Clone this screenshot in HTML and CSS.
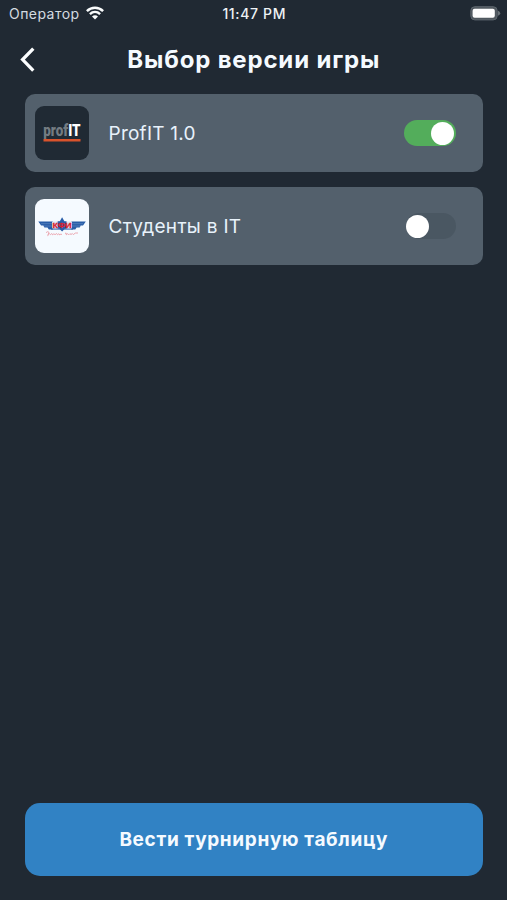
FILE: index.html
```html
<!DOCTYPE html>
<html lang="ru">
<head>
<meta charset="utf-8">
<meta name="viewport" content="width=device-width">
<title>Выбор версии игры</title>
<link rel="stylesheet" href="styles.css">
</head>
<body>
<div class="screen">
  <div class="status">
    <div class="carrier"><span class="carrier-name">Оператор</span>
      <svg class="wifi" viewBox="0 0 18 14" width="18" height="14"><g fill="none" stroke="#fafcfd" stroke-width="2.5"><path d="M.9 5.1C5.5.7 12.5.7 17.1 5.1"/><path d="M3.9 8.1C6.9 5.4 11.1 5.4 14.1 8.1"/></g><path d="M6 10.4C7.8 9 10.2 9 12 10.4L9 13.5Z" fill="#fafcfd"/></svg>
    </div>
    <span class="time">11:47 PM</span>
    <svg class="battery" viewBox="0 0 31 15" width="31" height="15"><rect x=".8" y=".7" width="26.4" height="13.2" rx="4" fill="#50585f" stroke="#5d666d"/><rect x="2.6" y="2.8" width="22.2" height="9" rx="2" fill="#fff"/><path d="M28 4.8Q30.2 5.5 30.2 7.3T28 9.8Z" fill="#6b7379"/></svg>
  </div>
  <header class="header">
    <svg class="back" viewBox="0 0 16 26" width="16" height="26"><path d="M13.3 1.6 2.6 12.6 13.3 23.6" fill="none" stroke="#fcfeff" stroke-width="3.3"/></svg>
    <h1 class="title">Выбор версии игры</h1>
  </header>
  <main class="list">
    <div class="card">
      <svg class="logo logo-dark" viewBox="0 0 54 54"><text x="8.3" y="30" font-family="Roboto, sans-serif" font-weight="900" font-size="16.5" fill="#747c82" textLength="37.2" lengthAdjust="spacingAndGlyphs">prof<tspan fill="#fff">IT</tspan></text><path d="M8.5 34.2H45.5" stroke="#d9532c" stroke-width="2.6"/></svg>
      <span class="name profit">ProfIT 1.0</span>
      <span class="toggle on"><span class="knob"></span></span>
    </div>
    <div class="card">
      <svg class="logo logo-light" viewBox="0 0 54 54"><path d="M3.3 22.4H18V30.5H13.8L12.5 28.6H9.4L8.3 26.5H6.1ZM50.8 22.4H36.2V30.5H40.3L41.6 28.6H44.7L45.8 26.5H48Z" fill="#285da8"/><path d="M6 24.7H17M7.8 27H17M48 24.7H37M46.3 27H37" stroke="#a9c3e4" stroke-width=".3"/><path d="M17 22.4H37V29.6H17Z" fill="#dfe3f0"/><path d="M27.1 18.2 29.4 22.3H31.5V29.7H29.8L27.1 32.5 24.4 29.7H22.7V22.3H24.8Z" fill="#285da8"/><text x="17.4" y="28.8" font-family="Liberation Sans, sans-serif" font-weight="700" font-size="8" fill="#d91f30" stroke="#d91f30" stroke-width=".3" textLength="19.2" lengthAdjust="spacingAndGlyphs">КФИ</text><path d="M16 30.1H38" stroke="#285da8" stroke-width="1"/><path d="M11 33.6Q13 31.8 14 33.4Q12 37.6 13 36.3Q15 33.4 15.6 35.6Q17 33.4 17.7 35.8Q19 33.7 20 35.7Q22 33.4 22.6 35.8Q24 33.5 24.8 36Q26 34 27 35.7M30 34.4Q31.6 33 31.3 35.8Q33 33.5 33.8 35.8Q35 33.6 36 35.6Q37.5 33.4 38.3 35.6Q40 33.3 43 34" fill="none" stroke="#e8949f" stroke-width=".8"/></svg>
      <span class="name students">Студенты в IT</span>
      <span class="toggle"><span class="knob"></span></span>
    </div>
  </main>
  <button class="action" type="button"><span>Вести турнирную таблицу</span></button>
</div>
</body>
</html>
```

FILE: styles.css
```css
* { box-sizing: border-box; }
body { margin: 0; background: #202933; font-family: Inter, sans-serif; color: #f5faff; }
.screen { height: 900px; padding: 0 24.5px 24.5px 25px; display: flex; flex-direction: column; overflow: hidden; }
.status { height: 28px; margin: 0 -18px 0 -16px; display: grid; grid-template-columns: 1fr auto 1fr; align-items: center; }
.carrier { display: flex; align-items: center; gap: 6px; }
.carrier-name { font-size: 14px; letter-spacing: .45px; color: #d4dbe0; line-height: 28px; }
.wifi { display: block; margin-top: -2px; }
.time { font-size: 14px; font-weight: 500; letter-spacing: .65px; margin-right: 1px; color: #eef2f5; line-height: 28px; }
.battery { justify-self: end; margin-top: -1px; }
.header { height: 66px; padding-bottom: 2px; margin: 0 0 0 -5px; display: grid; grid-template-columns: 16px 1fr 11px; align-items: center; }
.back { display: block; }
.title { margin: 0; font-size: 24px; line-height: 30px; font-weight: 700; letter-spacing: .83px; text-align: center; white-space: nowrap; }
.list { display: flex; flex-direction: column; gap: 15px; }
.card { height: 78px; border-radius: 10px; background: #53606c; display: flex; align-items: center; padding: 0 26.5px 0 10px; }
.logo { width: 54px; height: 54px; border-radius: 9px; flex: none; }
.logo-dark { background: #202a34; }
.logo-light { background: #f5faff; }
.name { margin-left: 19.5px; padding-top: 2px; font-size: 19px; line-height: 26px; letter-spacing: .3px; color: #e8f2fb; white-space: nowrap; }
.profit { letter-spacing: .25px; }
.toggle { width: 50px; height: 26px; border-radius: 13px; background: #4a5762; margin-left: auto; display: flex; align-items: center; }
.toggle.on { width: 52px; padding-right: 2.5px; background: #53ad5b; justify-content: flex-end; }
.knob { width: 23px; height: 23px; border-radius: 50%; background: #fff; }
.action { margin: auto 0 0; height: 73px; border: 0; border-radius: 15px; background: #3182c4; color: #f5faff; font: 700 19px/26px Inter, sans-serif; letter-spacing: .65px; padding: 2px 0 0; }
```
